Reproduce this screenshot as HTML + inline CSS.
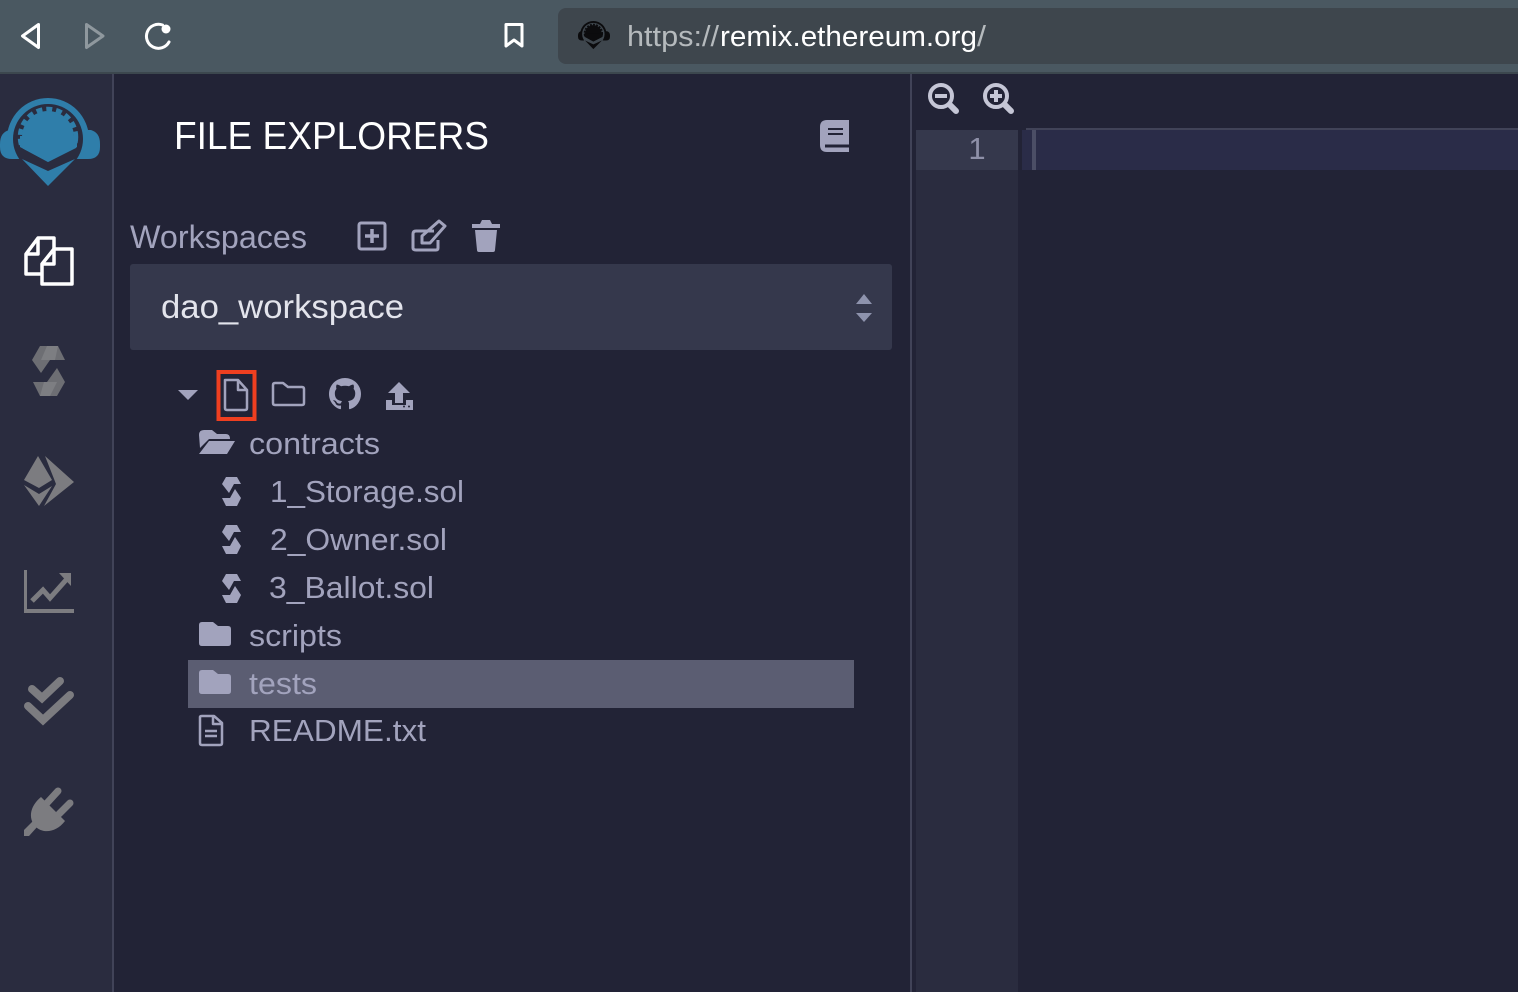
<!DOCTYPE html>
<html><head><meta charset="utf-8"><style>
html,body{margin:0;padding:0;background:#222336;overflow:hidden}
svg{display:block}
text{font-family:"Liberation Sans",sans-serif}
</style></head><body>
<svg width="1518" height="992" viewBox="0 0 1518 992" xmlns="http://www.w3.org/2000/svg">
<defs>
<g id="sol" fill="#a2a3bd">
<path d="M4 0H15L19 7H12L7 16 0 7Z"/>
<path d="M19 21 15 29H4L0 21H8L13 12Z"/>
</g>
<clipPath id="gearclip"><path d="M0 90H100V147L78 147 48 162 20 147 0 147Z"/></clipPath>
<g id="logo">
<path d="M7 139A41 41 0 0 1 89 139Z" fill="currentColor"/>
<path d="M9 130H91C97 132 100 136 100 144V147Q100 159 88 159H12Q0 159 0 147V144C0 136 3 132 9 130Z" fill="currentColor"/>
<circle cx="48" cy="139" r="35" fill="var(--r)"/>
<path d="M22 159 48 171 75 159 48 186Z" fill="currentColor"/>
<g clip-path="url(#gearclip)">
<circle cx="48" cy="137" r="26" fill="currentColor"/>
<circle cx="48" cy="137" r="28" fill="none" stroke="currentColor" stroke-width="4.500" stroke-dasharray="6 4"/>
</g>
<path d="M20 136H77L77 147 48 162 20 147Z" fill="currentColor"/>
</g>
</defs>
<rect width="1518" height="992" fill="#222336"/>
<!-- toolbar -->
<rect width="1518" height="72" fill="#4a5861"/>
<rect y="72" width="1518" height="2" fill="#3c474e"/>
<rect x="558" y="8" width="980" height="56" rx="8" fill="#3e464d"/>
<path d="M38.500 24.500 22.500 36 38.500 47.500Z" fill="none" stroke="#fff" stroke-width="3" stroke-linejoin="round"/>
<path d="M86.500 24.500 103 36 86.500 47.500Z" fill="none" stroke="#8f989e" stroke-width="3" stroke-linejoin="round"/>
<path d="M169 42A12 12 0 1 1 162.500 25" fill="none" stroke="#fff" stroke-width="3" stroke-linecap="round"/>
<circle cx="166" cy="29" r="4.500" fill="#fff"/>
<path d="M506 24.500H522V46L514 40 506 46Z" fill="none" stroke="#fff" stroke-width="3" stroke-linejoin="round"/>
<!-- favicon -->
<use href="#logo" transform="translate(578 -10.400) scale(.32)" style="color:#0b0b0d;--r:#3e464d"/>
<text x="627" y="46" font-size="29" fill="#b5babd" textLength="92" lengthAdjust="spacingAndGlyphs">https://</text>
<text x="720" y="46" font-size="29" fill="#fff" textLength="257" lengthAdjust="spacingAndGlyphs">remix.ethereum.org</text>
<text x="977" y="46" font-size="29" fill="#b5babd" textLength="9" lengthAdjust="spacingAndGlyphs">/</text>
<!-- icon panel -->
<rect y="74" width="112" height="918" fill="#2a2c3f"/>
<rect x="112" y="74" width="2" height="918" fill="#414358"/>
<!-- logo -->
<use href="#logo" style="color:#2f7eaa;--r:#2a2c3f"/>
<!-- file icon -->
<g fill="none" stroke="#fff" stroke-width="3.500" stroke-linejoin="round">
<path d="M41 274H26V254L38 238H54V250"/>
<path d="M26 254H38V238"/>
<path d="M42 284V264L54 249H72V284Z"/>
<path d="M42 264H54V249"/>
</g>
<!-- solidity -->
<g fill="#6d6e73">
<path d="M40 346H58L65 360H50L41 373 32 360Z"/>
<path d="M65 382 57 396H40L33 382H47L57 368Z"/>
</g>
<path d="M47 346H58L55 360H41Z M47 382H44L40 396H50L57 382Z" fill="#7d7e82"/>
<!-- eth/deploy -->
<g fill="#7c7c80">
<path d="M38 456 52 480 39 488 24 480Z"/>
<path d="M45 456 74 482 44 506 56 484Z"/>
<path d="M24 485 39 494 52 486 39 506Z"/>
</g>
<!-- chart -->
<path d="M24 570H27V609H74V613H24Z" fill="#7c7c80"/>
<path d="M32 601 43 590 50 598 66 580" fill="none" stroke="#7c7c80" stroke-width="5"/>
<path d="M59 573H71V586Z" fill="#7c7c80"/>
<!-- checks -->
<g fill="none" stroke="#7c7c80" stroke-width="8" stroke-linecap="round">
<path d="M32 689 42 698 60 681"/>
<path d="M28 706 43 720 70 695"/>
</g>
<!-- plug -->
<g fill="#7c7c80">
<path d="M41 797 65 821C56 833 42 834 35 826 28 818 30 806 41 797Z"/>
<path d="M47 803 58 791M59 814 70 803" stroke="#7c7c80" stroke-width="7" stroke-linecap="round"/>
<path d="M24 830 33 821 38 826 29 836H24Z"/>
</g>
<!-- header -->
<text x="174" y="149" font-size="39" fill="#fff" textLength="315" lengthAdjust="spacingAndGlyphs">FILE EXPLORERS</text>
<!-- book -->
<path d="M827 120H849V152H827Q820 152 820 145V127Q820 120 827 120Z" fill="#a2a3bd"/>
<path d="M825 146H849" stroke="#222336" stroke-width="3"/>
<path d="M828 129H843M828 134H843" stroke="#222336" stroke-width="2"/>
<text x="130" y="248" font-size="32" fill="#a2a3bd" textLength="177" lengthAdjust="spacingAndGlyphs">Workspaces</text>
<!-- workspace icons -->
<rect x="359" y="223" width="26" height="26" rx="2" fill="none" stroke="#a2a3bd" stroke-width="3"/>
<path d="M372 229V243M365 236H379" stroke="#a2a3bd" stroke-width="3.500"/>
<path d="M434 231H416Q413 231 413 234V248Q413 250 416 250H436Q438 250 438 248V240" fill="none" stroke="#a2a3bd" stroke-width="3"/>
<path d="M422 236 439 221 445 226 430 243H422Z" fill="none" stroke="#a2a3bd" stroke-width="3" stroke-linejoin="round"/>
<path d="M472 224H480L482 220H490L492 224H500V228H472ZM475 230H497L495 250Q495 252 493 252H479Q477 252 477 250Z" fill="#a2a3bd"/>
<!-- select -->
<rect x="130" y="264" width="762" height="86" rx="3" fill="#35384c"/>
<text x="161" y="318" font-size="33" fill="#e3e4ec" textLength="243" lengthAdjust="spacingAndGlyphs">dao_workspace</text>
<path d="M856 304 864 294 872 304ZM856 313H872L864 322Z" fill="#8e93ad"/>
<!-- tree toolbar -->
<path d="M178 390H198L188 400Z" fill="#a2a3bd"/>
<rect x="218.500" y="372" width="36" height="47" fill="none" stroke="#ef3f20" stroke-width="4"/>
<path d="M225 380H238L247 390V408Q247 410 245 410H227Q225 410 225 408ZM238 380V390H247" fill="none" stroke="#a2a3bd" stroke-width="2.500" stroke-linejoin="round"/>
<path d="M273 385Q273 383 275 383H283L288 387H302Q304 387 304 389V403Q304 405 302 405H275Q273 405 273 403Z" fill="none" stroke="#a2a3bd" stroke-width="2.500" stroke-linejoin="round"/>
<path transform="translate(329 378) scale(2)" fill="#a2a3bd" d="M8 0C3.580 0 0 3.580 0 8c0 3.540 2.290 6.530 5.470 7.590.4.070.550-.170.550-.380 0-.190-.010-.820-.010-1.490-2.010.370-2.530-.490-2.690-.940-.090-.230-.480-.940-.820-1.130-.280-.150-.680-.520-.010-.530.630-.010 1.080.580 1.230.820.720 1.210 1.870.870 2.330.660.070-.520.280-.870.510-1.070-1.780-.2-3.640-.890-3.640-3.950 0-.870.310-1.590.820-2.150-.080-.2-.360-1.020.080-2.120 0 0 .670-.210 2.200.820.640-.180 1.320-.270 2-.270.680 0 1.360.090 2 .270 1.530-1.040 2.200-.820 2.200-.820.440 1.100.160 1.920.080 2.120.510.560.820 1.270.820 2.150 0 3.070-1.870 3.750-3.650 3.950.290.250.540.730.540 1.480 0 1.070-.010 1.930-.010 2.200 0 .210.150.460.550.380A8.013 8.013 0 0016 8c0-4.420-3.580-8-8-8z"/>
<path d="M399 382 410 393H403V403H395V393H388Z" fill="#a2a3bd"/>
<path d="M386 400H392V405H406V400H413V410H386Z" fill="#a2a3bd"/>
<circle cx="404" cy="406.500" r="1" fill="#222336"/><circle cx="409" cy="406.500" r="1" fill="#222336"/>
<!-- tree -->
<path d="M199 435Q199 430 204 430H212L217 434H226Q230 434 230 439H209L200 448Z M209 441H235L227 454H199Z" fill="#a2a3bd"/>
<text x="249" y="454" font-size="31" fill="#a2a3bd" textLength="131" lengthAdjust="spacingAndGlyphs">contracts</text>
<use href="#sol" x="222" y="477"/>
<text x="270" y="502" font-size="31" fill="#a2a3bd" textLength="194" lengthAdjust="spacingAndGlyphs">1_Storage.sol</text>
<use href="#sol" x="222" y="525"/>
<text x="270" y="550" font-size="31" fill="#a2a3bd" textLength="177" lengthAdjust="spacingAndGlyphs">2_Owner.sol</text>
<use href="#sol" x="222" y="574"/>
<text x="269" y="598" font-size="31" fill="#a2a3bd" textLength="165" lengthAdjust="spacingAndGlyphs">3_Ballot.sol</text>
<path d="M199 625Q199 622 202 622H213L218 626H228Q231 626 231 629V643Q231 646 228 646H202Q199 646 199 643Z" fill="#a2a3bd"/>
<text x="249" y="646" font-size="31" fill="#a2a3bd" textLength="93" lengthAdjust="spacingAndGlyphs">scripts</text>
<rect x="188" y="660" width="666" height="48" fill="#5b5d72"/>
<path d="M199 673Q199 670 202 670H213L218 674H228Q231 674 231 677V691Q231 694 228 694H202Q199 694 199 691Z" fill="#a2a3bd"/>
<text x="249" y="694" font-size="31" fill="#a2a3bd" textLength="68" lengthAdjust="spacingAndGlyphs">tests</text>
<path d="M200 717Q200 716 202 716H214L222 723V743Q222 745 220 745H202Q200 745 200 743ZM213 716V724H222" fill="none" stroke="#a2a3bd" stroke-width="2.500" stroke-linejoin="round"/>
<path d="M205 731H217M205 736H217" stroke="#a2a3bd" stroke-width="2.500"/>
<text x="249" y="741" font-size="31" fill="#a2a3bd" textLength="177" lengthAdjust="spacingAndGlyphs">README.txt</text>
<!-- editor -->
<rect x="910" y="74" width="2" height="918" fill="#414358"/>
<rect x="916" y="130" width="104" height="862" fill="#2a2c3f"/>
<rect x="916" y="130" width="102" height="40" fill="#35384c"/>
<rect x="1018" y="130" width="3" height="862" fill="#222336"/>
<rect x="1022" y="130" width="496" height="40" fill="#2a2c48"/>
<rect x="1026" y="128" width="492" height="2" fill="#414358"/>
<rect x="1032" y="130" width="4" height="40" fill="#4b4e66"/>
<text x="977" y="159" font-size="31" text-anchor="middle" fill="#8e90a8">1</text>
<g fill="none" stroke="#c5c6d6" stroke-width="4">
<circle cx="941" cy="96" r="11"/>
<path d="M950 105 956 111" stroke-width="6" stroke-linecap="round"/>
<path d="M935 96H947"/>
<circle cx="996" cy="96" r="11"/>
<path d="M1005 105 1011 111" stroke-width="6" stroke-linecap="round"/>
<path d="M990 96H1002M996 90V102"/>
</g>
</svg>
</body></html>
